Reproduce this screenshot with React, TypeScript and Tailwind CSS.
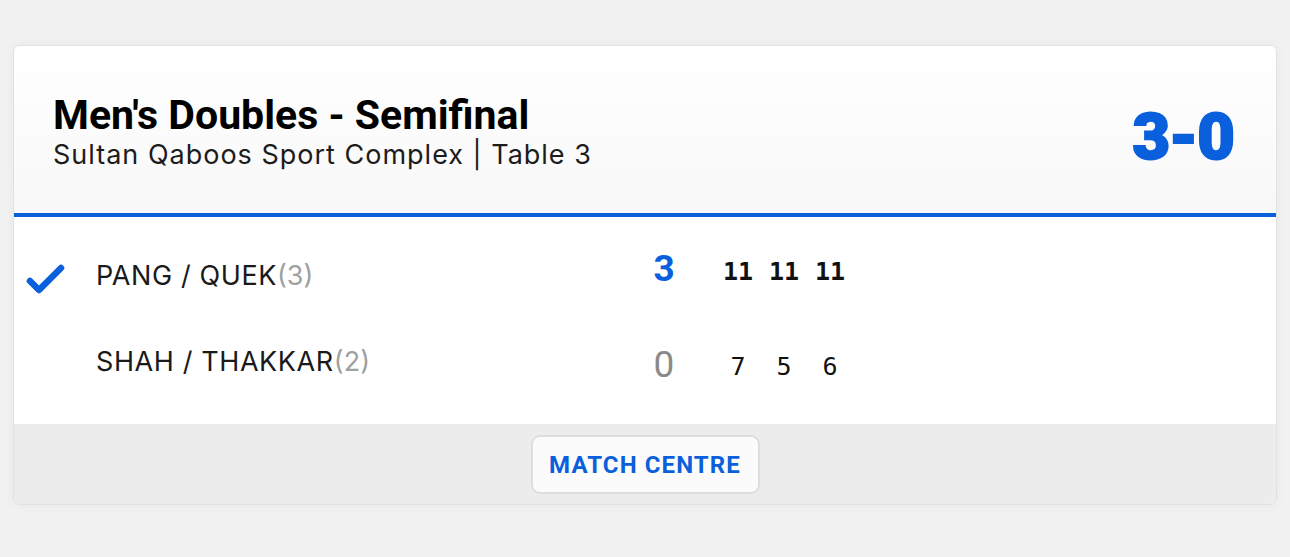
import React from "react";

const rows = [
  { name: "PANG / QUEK", seed: 3, score: 3, games: [11, 11, 11], winner: true },
  { name: "SHAH / THAKKAR", seed: 2, score: 0, games: [7, 5, 6], winner: false },
];

function Check() {
  return (
    <svg width="40" height="32" viewBox="0 0 40 32" fill="none">
      <path d="M4 19 L13 28 L35 6" stroke="#0a5fdc" strokeWidth="6.5" strokeLinecap="round" strokeLinejoin="round" />
    </svg>
  );
}

export default function App() {
  return (
    <div className="w-[1290px] h-[557px] bg-[#f1f1f1] pt-[45px] px-[13px]" style={{ fontFamily: "Roboto, 'Noto Sans', sans-serif" }}>
      <div className="rounded-[7px] border border-[#e1e1e1] bg-white overflow-hidden shadow-[0_0_12px_rgba(0,0,0,0.04)]">
        {/* header */}
        <div className="h-[167px] flex items-center justify-between pl-[39px] pr-[41px] bg-gradient-to-b from-white to-[#f8f8f8]">
          <div className="pt-[6px]">
            <h1 className="text-[41px] leading-[44px] font-bold text-black">Men's Doubles - Semifinal</h1>
            <p className="text-[27px] leading-[36px] text-[#1c1c1c] tracking-[1px]" style={{ fontFamily: "Inter, Roboto, sans-serif" }}>
              Sultan Qaboos Sport Complex | Table 3
            </p>
          </div>
          <div className="text-[65px] leading-none font-black text-[#0a5fdc] tracking-[-1px] pt-[16px] pr-[1px] [-webkit-text-stroke:2px_#0a5fdc]">
            3-0
          </div>
        </div>
        <div className="h-[4px] bg-[#0a5fdc]" />

        {/* rows */}
        <div className="pt-[15px] pb-[20px]">
          {rows.map((r) => (
            <div key={r.name} className="h-[86px] flex items-center">
              <div className="w-[82px] pl-[12px] flex items-center pt-[6px]">{r.winner && <Check />}</div>
              <div className="w-[557px] text-[27px] text-[#1a1a1a] tracking-[0.6px] pt-[2px]" style={{ fontFamily: "Inter, Roboto, sans-serif" }}>
                {r.name}
                <span className="text-[#a0a0a0] tracking-normal">({r.seed})</span>
              </div>
              <div
                className={
                  r.winner
                    ? "w-[22px] text-center text-[37px] font-bold text-[#0a5fdc] -mt-[12px]"
                    : "w-[22px] text-center text-[37px] font-normal text-[#8a8a8a] mt-[8px]"
                }
              >
                {r.score}
              </div>
              <div className="ml-[40px] flex" style={{ fontFamily: "'DejaVu Sans Mono', monospace" }}>
                {r.games.map((g, i) => (
                  <div
                    key={i}
                    className={
                      r.winner
                        ? "w-[46px] text-center text-[25px] font-bold text-[#111] -mt-[6px]"
                        : "w-[46px] text-center text-[25px] font-normal text-[#111] mt-[12px]"
                    }
                  >
                    {g}
                  </div>
                ))}
              </div>
            </div>
          ))}
        </div>

        {/* footer */}
        <div className="h-[80px] bg-[#ececec] flex justify-center pt-[11px]">
          <button className="w-[229px] h-[59px] rounded-[9px] border-2 border-[#dedede] bg-[#fbfbfb] text-[24px] font-bold text-[#0a5fdc] tracking-[1.1px]">
            MATCH CENTRE
          </button>
        </div>
      </div>
    </div>
  );
}
